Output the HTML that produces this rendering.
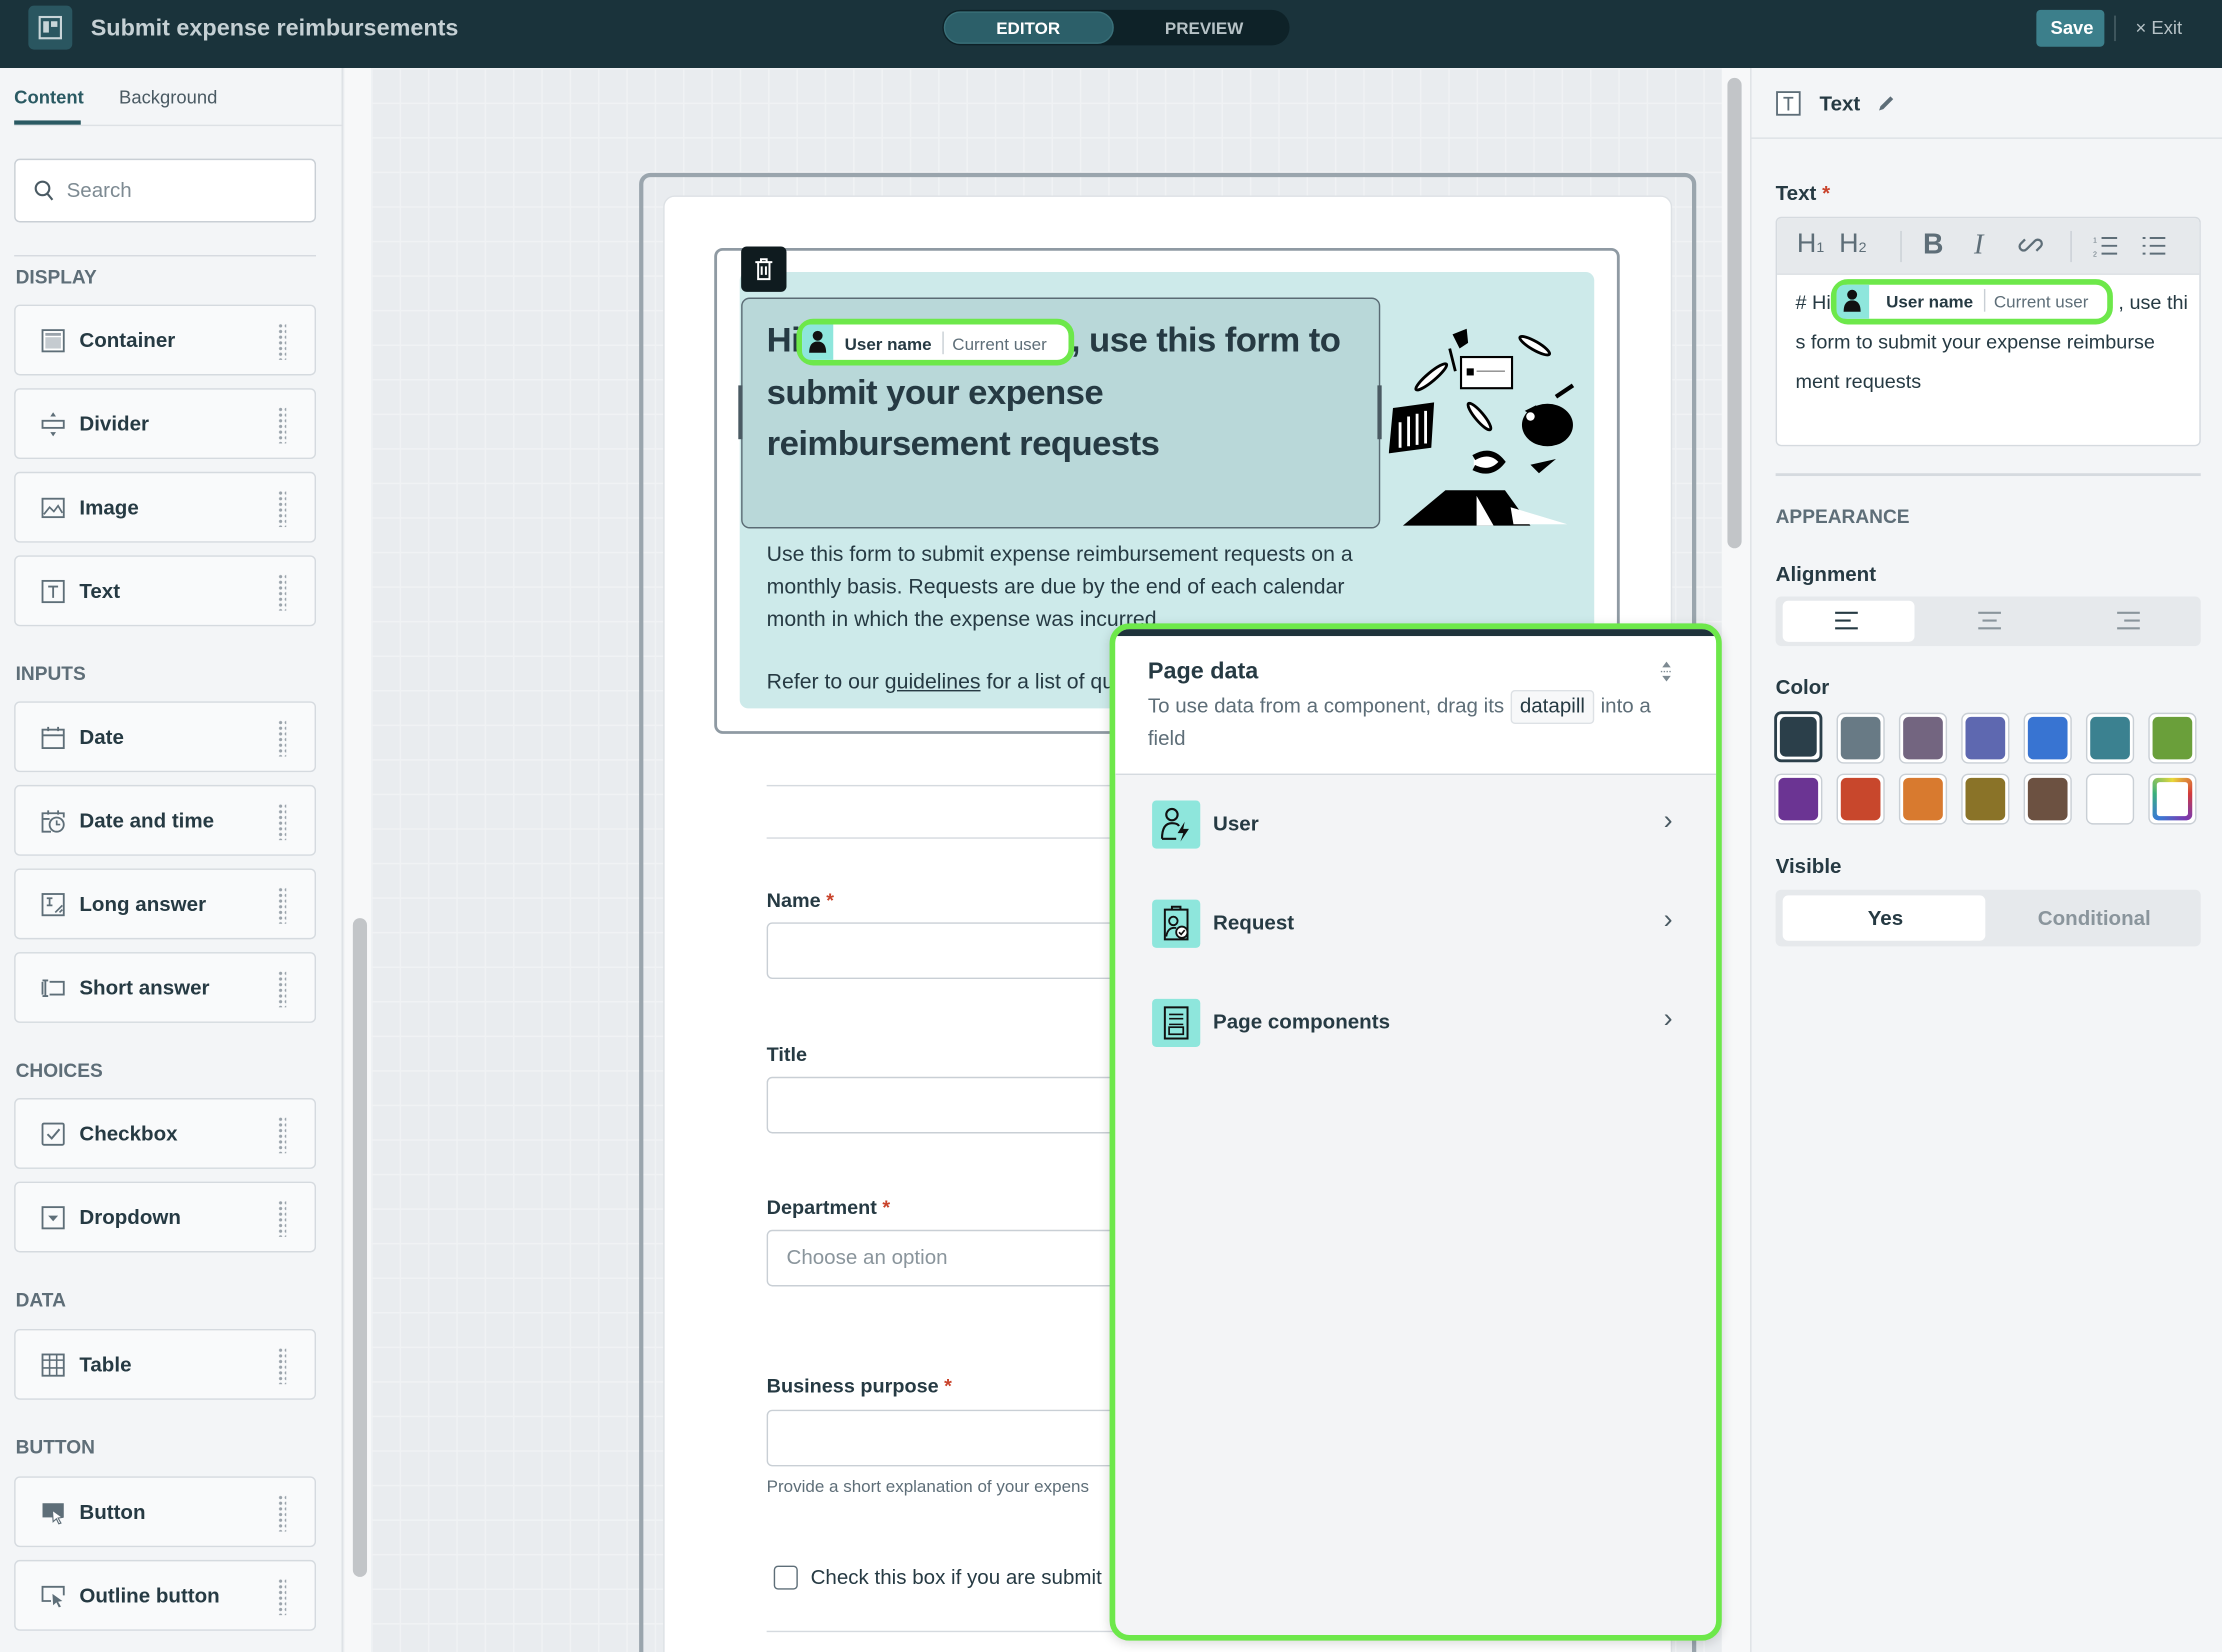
<!DOCTYPE html>
<html><head><meta charset="utf-8">
<style>
*{box-sizing:border-box;margin:0;padding:0}
html,body{width:2222px;height:1652px;overflow:hidden;background:#e9ecef}
#w{position:absolute;left:0;top:0;width:1568px;height:1166px;transform:scale(1.41709,1.41681);transform-origin:0 0;font-family:"Liberation Sans",sans-serif;color:#263a43;overflow:hidden}
.a{position:absolute}
.hdr{left:0;top:0;width:1568px;height:48px;background:#1a333b}
.lp{left:0;top:48px;width:242px;height:1118px;background:#f3f5f7;border-right:1px solid #dde1e5}
.sec{font-size:13.5px;font-weight:bold;color:#5e6e78;left:11px}
.it{left:10px;width:213px;height:50px;background:#f9fafb;border:1px solid #d5dadf;border-radius:4px}
.it .ic{position:absolute;left:18px;top:16px;width:17px;height:17px}
.it .t{position:absolute;left:45px;top:17px;font-size:14.5px;font-weight:bold;color:#263a43}
.it .g{position:absolute;left:185px;top:12px;width:6px;height:26px;background-image:radial-gradient(circle,#9aa3ab 1px,transparent 1.3px);background-size:4px 4px}
.canvas{left:262px;top:48px;width:953px;height:1118px;background-color:#e9ecef;background-image:linear-gradient(#f0f2f4 1px,transparent 1px),linear-gradient(90deg,#f0f2f4 1px,transparent 1px);background-size:20px 24.4px}
.lbl{font-size:14px;font-weight:bold;color:#263a43;left:541px}
.lbl b{color:#c9432b}
.inp{left:541px;width:260px;height:40px;background:#fff;border:1px solid #c9cfd5;border-radius:4px}
.rp{left:1235px;top:48px;width:333px;height:1118px;background:#f3f5f7;border-left:1px solid #dde1e5}
.sw{width:34px;height:36px;border-radius:5px;border:1px solid #c9cfd5;padding:2px;background:#fff}
.sw div{width:100%;height:100%;border-radius:4px}
.row{left:813px;font-size:14.5px;font-weight:bold;color:#263a43}
.rowic{left:813px;width:34px;height:34px;background:#8ee6dc;border-radius:3px}
.chev{left:1174px;font-size:19px;color:#4a5a63}
</style></head><body><div id="w">

<div class="a hdr"></div>
<div class="a" style="left:20px;top:4px;width:31px;height:31px;background:#2a5660;border-radius:4px"></div>
<svg class="a" style="left:27px;top:11px" width="17" height="17" viewBox="0 0 17 17"><rect x="1" y="1" width="15" height="15" fill="none" stroke="#c8d5d8" stroke-width="1.5"/><rect x="3.5" y="4" width="4" height="8" fill="#c8d5d8"/><rect x="9" y="4" width="4.5" height="4" fill="#c8d5d8"/></svg>
<div class="a" style="left:64px;top:11px;font-size:16.5px;font-weight:bold;color:#c5d0d4">Submit expense reimbursements</div>
<div class="a" style="left:665px;top:7px;width:245px;height:25px;background:#0e2228;border-radius:13px"></div>
<div class="a" style="left:666px;top:8px;width:120px;height:23px;background:#2c5f69;border-radius:12px;border:1px solid #3a7079"></div>
<div class="a" style="left:703px;top:13px;font-size:12px;font-weight:bold;color:#fff">EDITOR</div>
<div class="a" style="left:822px;top:13px;font-size:12px;font-weight:bold;color:#b6c2c6">PREVIEW</div>
<div class="a" style="left:1437px;top:7px;width:48px;height:26px;background:#3c7f8b;border-radius:3px"></div>
<div class="a" style="left:1447px;top:12px;font-size:13px;font-weight:bold;color:#fff">Save</div>
<div class="a" style="left:1492px;top:11px;width:1px;height:18px;background:#4d646b"></div>
<div class="a" style="left:1507px;top:12px;font-size:13px;color:#b6c2c6">× Exit</div>

<div class="a lp"></div>
<div class="a" style="left:10px;top:61px;font-size:13px;font-weight:bold;color:#2a5a63">Content</div>
<div class="a" style="left:84px;top:61px;font-size:13px;color:#4a5a63">Background</div>
<div class="a" style="left:10px;top:88px;width:232px;height:1px;background:#dde1e5"></div>
<div class="a" style="left:10px;top:85px;width:47px;height:3px;background:#2a5a63"></div>
<div class="a" style="left:10px;top:112px;width:213px;height:45px;background:#fff;border:1px solid #c9cfd5;border-radius:4px"></div>
<svg class="a" style="left:24px;top:127px" width="15" height="16" viewBox="0 0 15 16"><circle cx="6" cy="6" r="4.8" fill="none" stroke="#4a5a63" stroke-width="1.5"/><path d="M9.5 9.8 L13 14" stroke="#4a5a63" stroke-width="1.5"/></svg>
<div class="a" style="left:47px;top:127px;font-size:14.5px;color:#7d8a92">Search</div>
<div class="a" style="left:10px;top:180px;width:213px;height:1px;background:#d5dadf"></div>

<div class="a sec" style="top:188px">DISPLAY</div>
<div class="a it" style="top:215px"><svg class="ic" viewBox="0 0 17 17"><rect x="1" y="1" width="15" height="15" fill="#fff" stroke="#5e6e78" stroke-width="1.3"/><rect x="3" y="3" width="11" height="2" fill="#9aa3ab"/><rect x="3" y="6" width="11" height="8" fill="#c5cbd0"/></svg><span class="t">Container</span><span class="g"></span></div>
<div class="a it" style="top:274px"><svg class="ic" viewBox="0 0 17 17"><rect x="1" y="6" width="15" height="5" fill="none" stroke="#5e6e78" stroke-width="1.3"/><path d="M8.5 0 L6.5 3 H10.5Z M8.5 17 L6.5 14 H10.5Z" fill="#5e6e78"/></svg><span class="t">Divider</span><span class="g"></span></div>
<div class="a it" style="top:333px"><svg class="ic" viewBox="0 0 17 17"><rect x="1" y="2" width="15" height="13" fill="none" stroke="#5e6e78" stroke-width="1.3"/><path d="M2 13 L6 8 L9 11 L12 7 L15 12" fill="none" stroke="#5e6e78" stroke-width="1.2"/></svg><span class="t">Image</span><span class="g"></span></div>
<div class="a it" style="top:392px"><svg class="ic" viewBox="0 0 17 17"><rect x="1" y="1" width="15" height="15" fill="none" stroke="#5e6e78" stroke-width="1.3"/><path d="M5 5 H12 M8.5 5 V13" stroke="#5e6e78" stroke-width="1.3"/></svg><span class="t">Text</span><span class="g"></span></div>

<div class="a sec" style="top:468px">INPUTS</div>
<div class="a it" style="top:495px"><svg class="ic" viewBox="0 0 17 17"><rect x="1" y="3" width="15" height="13" fill="none" stroke="#5e6e78" stroke-width="1.3"/><path d="M1 7 H16 M5 1 V4 M12 1 V4" stroke="#5e6e78" stroke-width="1.3"/></svg><span class="t">Date</span><span class="g"></span></div>
<div class="a it" style="top:554px"><svg class="ic" viewBox="0 0 17 17"><path d="M7 16 H1 V3 H16 V6 M1 7 H6 M5 1 V4 M12 1 V4" fill="none" stroke="#5e6e78" stroke-width="1.3"/><circle cx="11" cy="11" r="5" fill="none" stroke="#5e6e78" stroke-width="1.3"/><path d="M11 8 V11 H13.5" fill="none" stroke="#5e6e78" stroke-width="1.2"/></svg><span class="t">Date and time</span><span class="g"></span></div>
<div class="a it" style="top:613px"><svg class="ic" viewBox="0 0 17 17"><rect x="1" y="1" width="15" height="15" fill="none" stroke="#5e6e78" stroke-width="1.3"/><path d="M4 4 H8 M6 4 V9 M4 9 H8 M10 14 L15 9 M13 14 L15 12" stroke="#5e6e78" stroke-width="1.2"/></svg><span class="t">Long answer</span><span class="g"></span></div>
<div class="a it" style="top:672px"><svg class="ic" viewBox="0 0 17 17"><path d="M6 4 H16 V13 H6 M3 3 V14 M1 3 H5 M1 14 H5 M1 4 V13" fill="none" stroke="#5e6e78" stroke-width="1.3"/></svg><span class="t">Short answer</span><span class="g"></span></div>

<div class="a sec" style="top:748px">CHOICES</div>
<div class="a it" style="top:775px"><svg class="ic" viewBox="0 0 17 17"><rect x="1" y="1" width="15" height="15" rx="1" fill="none" stroke="#5e6e78" stroke-width="1.3"/><path d="M4.5 8.5 L7.5 11.5 L13 5" fill="none" stroke="#5e6e78" stroke-width="1.4"/></svg><span class="t">Checkbox</span><span class="g"></span></div>
<div class="a it" style="top:834px"><svg class="ic" viewBox="0 0 17 17"><rect x="1" y="1" width="15" height="15" fill="none" stroke="#5e6e78" stroke-width="1.3"/><path d="M5 7 H12 L8.5 11Z" fill="#5e6e78"/></svg><span class="t">Dropdown</span><span class="g"></span></div>

<div class="a sec" style="top:910px">DATA</div>
<div class="a it" style="top:938px"><svg class="ic" viewBox="0 0 17 17"><rect x="1" y="1" width="15" height="15" fill="none" stroke="#5e6e78" stroke-width="1.3"/><path d="M1 5 H16 M6 1 V16 M11 1 V16 M1 10.5 H16" stroke="#5e6e78" stroke-width="1.1"/></svg><span class="t">Table</span><span class="g"></span></div>

<div class="a sec" style="top:1014px">BUTTON</div>
<div class="a it" style="top:1042px"><svg class="ic" viewBox="0 0 17 17"><rect x="1" y="2" width="15" height="10" fill="#5e6e78"/><path d="M8 7 L15 12 L12 12.5 L14 16 L12.5 16.5 L10.8 13 L8.5 15Z" fill="#fff" stroke="#5e6e78" stroke-width="0.8"/></svg><span class="t">Button</span><span class="g"></span></div>
<div class="a it" style="top:1101px"><svg class="ic" viewBox="0 0 17 17"><path d="M7 12 H1 V2 H16 V8" fill="none" stroke="#5e6e78" stroke-width="1.3"/><path d="M8 7 L15 12 L12 12.5 L14 16 L12.5 16.5 L10.8 13 L8.5 15Z" fill="#5e6e78"/></svg><span class="t">Outline button</span><span class="g"></span></div>

<div class="a" style="left:243px;top:48px;width:19px;height:1118px;background:#f7f8f9"></div>
<div class="a" style="left:249px;top:648px;width:10px;height:465px;background:#c2c5c8;border-radius:5px"></div>

<div class="a canvas"></div>
<div class="a" style="left:1215px;top:48px;width:20px;height:1118px;background:#f7f8f9"></div>
<div class="a" style="left:1219px;top:55px;width:10px;height:332px;background:#c2c5c8;border-radius:5px"></div>

<div class="a" style="left:451px;top:122px;width:746px;height:1060px;border:3px solid #9aa5ad;border-radius:8px"></div>
<div class="a" style="left:468px;top:138px;width:712px;height:1040px;background:#fff;border:1px solid #dde1e5;border-radius:8px"></div>
<div class="a" style="left:504px;top:175px;width:639px;height:343px;border:2px solid #8f9aa3;border-radius:6px"></div>
<div class="a" style="left:522px;top:192px;width:603px;height:308px;background:#cdeaea;border-radius:6px"></div>
<div class="a" style="left:523px;top:210px;width:451px;height:163px;background:#b9d8d9;border:1px solid #5a6b74;border-radius:6px"></div>
<div class="a" style="left:521px;top:272px;width:3px;height:38px;background:#4a5a63"></div>
<div class="a" style="left:972px;top:272px;width:3px;height:38px;background:#4a5a63"></div>
<div class="a" style="left:523px;top:174px;width:32px;height:32px;background:#0f1b1f;border-radius:4px"></div>
<svg class="a" style="left:531px;top:181px" width="16" height="18" viewBox="0 0 16 18"><path d="M4 4 H12 V16 H4Z M2 4 H14 M6 4 V2 H10 V4 M6.5 7 V13 M9.5 7 V13" fill="none" stroke="#fff" stroke-width="1.4"/></svg>

<div class="a" style="left:541px;top:223px;font-size:24.5px;font-weight:bold;color:#263a43;line-height:36.5px;width:430px;letter-spacing:-0.4px">Hi<span style="display:inline-block;width:191px"></span>, use this form to<br>submit your expense<br>reimbursement requests</div>
<div class="a" style="left:562px;top:225px;width:196px;height:33px;border:4px solid #6de84a;border-radius:12px;background:#fff"></div>
<div class="a" style="left:566px;top:229px;width:22px;height:25px;background:#8ee6dc;border-radius:6px 0 0 6px"></div>
<svg class="a" style="left:569px;top:232px" width="16" height="18" viewBox="0 0 16 18"><circle cx="8" cy="5" r="3.5" fill="#111"/><path d="M2 17 Q2 9 8 9 Q14 9 14 17Z" fill="#111"/></svg>
<div class="a" style="left:596px;top:236px;font-size:12px;font-weight:bold;color:#263a43">User name</div>
<div class="a" style="left:665px;top:234px;width:1px;height:16px;background:#c9cfd5"></div>
<div class="a" style="left:672px;top:236px;font-size:12px;color:#5e6e78">Current user</div>

<svg class="a" style="left:980px;top:228px" width="135" height="145" viewBox="0 0 135 145">
<path d="M45 8 L55 4 L56 14 L50 18Z" fill="#000"/><line x1="43" y1="18" x2="47" y2="34" stroke="#000" stroke-width="2"/>
<rect x="51" y="24" width="36" height="22" fill="#fff" stroke="#000" stroke-width="1.5"/><rect x="55" y="32" width="5" height="5" fill="#000"/><line x1="62" y1="34" x2="82" y2="34" stroke="#888"/>
<ellipse cx="103" cy="16" rx="12" ry="3" transform="rotate(30 103 16)" fill="#fff" stroke="#000" stroke-width="2"/>
<ellipse cx="30" cy="38" rx="14" ry="3" transform="rotate(-40 30 38)" fill="#fff" stroke="#000" stroke-width="2"/>
<path d="M3 60 L32 56 L30 88 L0 92Z" fill="#000"/><path d="M8 70 V88 M14 66 V87 M20 64 V86 M26 62 V85" stroke="#fff" stroke-width="2"/>
<ellipse cx="64" cy="66" rx="12" ry="3" transform="rotate(50 64 66)" fill="#fff" stroke="#000" stroke-width="2"/>
<ellipse cx="112" cy="72" rx="18" ry="15" fill="#000"/><path d="M96 62 L104 58 L106 68Z" fill="#000"/><circle cx="100" cy="66" r="3" fill="#fff"/>
<line x1="118" y1="52" x2="130" y2="44" stroke="#000" stroke-width="3"/>
<path d="M60 95 Q72 88 80 98 Q72 108 60 102" fill="#fff" stroke="#000" stroke-width="4"/>
<path d="M100 100 L118 96 L106 106Z" fill="#000"/>
<path d="M10 143 L40 118 H82 L100 143Z" fill="#000"/><path d="M62 122 L74 143 H62Z" fill="#fff"/><path d="M86 130 L126 142 H88Z" fill="#fff"/>
</svg>

<div class="a" style="left:541px;top:380px;font-size:15px;line-height:23px;color:#263a43;width:420px">Use this form to submit expense reimbursement requests on a monthly basis. Requests are due by the end of each calendar month in which the expense was incurred.</div>
<div class="a" style="left:541px;top:473px;font-size:15px;color:#263a43;white-space:nowrap">Refer to our <u>guidelines</u> for a list of qu</div>

<div class="a" style="left:541px;top:554px;width:250px;height:1px;background:#d5dadf"></div>
<div class="a" style="left:541px;top:591px;width:250px;height:1px;background:#d5dadf"></div>
<div class="a lbl" style="top:627px">Name <b>*</b></div>
<div class="a inp" style="top:651px"></div>
<div class="a lbl" style="top:736px">Title</div>
<div class="a inp" style="top:760px"></div>
<div class="a lbl" style="top:844px">Department <b>*</b></div>
<div class="a inp" style="top:868px"></div>
<div class="a" style="left:555px;top:880px;font-size:14.5px;color:#8a959c">Choose an option</div>
<div class="a lbl" style="top:970px">Business purpose <b>*</b></div>
<div class="a inp" style="top:995px"></div>
<div class="a" style="left:541px;top:1042px;font-size:12px;color:#5e6e78;white-space:nowrap">Provide a short explanation of your expens</div>
<div class="a" style="left:546px;top:1105px;width:17px;height:17px;border:1.5px solid #5e6e78;border-radius:3px;background:#fff"></div>
<div class="a" style="left:572px;top:1106px;font-size:14.5px;color:#263a43;white-space:nowrap">Check this box if you are submit</div>
<div class="a" style="left:541px;top:1151px;width:250px;height:1px;background:#d5dadf"></div>

<div class="a" style="left:783px;top:440px;width:432px;height:718px;background:#f3f4f6;border:4px solid #6de84a;border-radius:14px;overflow:hidden;box-shadow:0 2px 8px rgba(0,0,0,.15)">
 <div style="position:absolute;left:0;top:0;width:100%;height:5px;background:#1f333b"></div>
 <div style="position:absolute;left:0;top:5px;width:100%;height:98px;background:#fff;border-bottom:1px solid #d5dadf"></div>
</div>
<div class="a" style="left:810px;top:465px;font-size:16.5px;font-weight:bold;color:#263a43">Page data</div>
<svg class="a" style="left:1170px;top:466px" width="12" height="16" viewBox="0 0 12 16"><path d="M6 1 L9 5 H3Z M6 15 L9 11 H3Z" fill="#7d8a92"/><path d="M2 8 H10" stroke="#7d8a92" stroke-dasharray="1 1"/></svg>
<div class="a" style="left:810px;top:487px;font-size:14.5px;line-height:23px;color:#5e6e78;width:380px">To use data from a component, drag its <span style="display:inline-block;border:1px solid #dde1e5;background:#f7f8f9;border-radius:3px;padding:0 6px;color:#263a43;line-height:22px">datapill</span> into a field</div>

<div class="a rowic" style="top:565px"></div>
<svg class="a" style="left:818px;top:569px" width="24" height="26" viewBox="0 0 24 26"><circle cx="9" cy="6" r="4" fill="none" stroke="#111" stroke-width="1.5"/><path d="M2 23 Q2 12 9 12 Q13 12 14 14 M2 23 H12" fill="none" stroke="#111" stroke-width="1.5"/><path d="M18 11 L13 19 H17 L15 25 L21 16 H17Z" fill="#111"/></svg>
<div class="a row" style="top:574px;left:856px">User</div>
<div class="a chev" style="top:569px">›</div>
<div class="a rowic" style="top:635px"></div>
<svg class="a" style="left:819px;top:638px" width="22" height="28" viewBox="0 0 22 28"><path d="M3 4 H19 V25 H3Z M8 4 V2 H14 V4" fill="none" stroke="#111" stroke-width="1.4"/><circle cx="9" cy="12" r="3" fill="none" stroke="#111" stroke-width="1.3"/><path d="M4 23 Q5 16 11 17" fill="none" stroke="#111" stroke-width="1.3"/><circle cx="15" cy="20" r="4" fill="#fff" stroke="#111" stroke-width="1.3"/><path d="M13 20 L14.5 21.5 L17 18.5" fill="none" stroke="#111" stroke-width="1.2"/></svg>
<div class="a row" style="top:644px;left:856px">Request</div>
<div class="a chev" style="top:639px">›</div>
<div class="a rowic" style="top:705px"></div>
<svg class="a" style="left:820px;top:709px" width="20" height="26" viewBox="0 0 20 26"><rect x="2" y="2" width="16" height="22" fill="none" stroke="#111" stroke-width="1.4"/><path d="M5 7 H15 M5 10 H15 M5 14 H15" stroke="#111" stroke-width="1.1"/><rect x="5" y="16" width="10" height="5" fill="none" stroke="#111" stroke-width="1.2"/></svg>
<div class="a row" style="top:714px;left:856px">Page components</div>
<div class="a chev" style="top:709px">›</div>

<div class="a rp"></div>
<svg class="a" style="left:1253px;top:64px" width="18" height="18" viewBox="0 0 18 18"><rect x="1" y="1" width="16" height="16" fill="#fff" stroke="#5e6e78" stroke-width="1.3"/><path d="M5.5 5 H12.5 M9 5 V14" stroke="#5e6e78" stroke-width="1.3"/></svg>
<div class="a" style="left:1284px;top:66px;font-size:14.5px;font-weight:bold;color:#263a43">Text</div>
<svg class="a" style="left:1324px;top:66px" width="14" height="14" viewBox="0 0 14 14"><path d="M2 12 L3 9 L10 2 L12 4 L5 11Z" fill="#5e6e78"/></svg>
<div class="a" style="left:1236px;top:97px;width:332px;height:1px;background:#dde1e5"></div>
<div class="a" style="left:1253px;top:129px;font-size:14.5px;font-weight:bold;color:#263a43">Text<b style="color:#c9432b"> *</b></div>
<div class="a" style="left:1253px;top:153px;width:300px;height:162px;background:#fff;border:1px solid #d5dadf;border-radius:4px;overflow:hidden"><div style="height:40px;background:#e6e9ec;border-bottom:1px solid #dde1e5"></div></div>
<div class="a" style="left:1268px;top:162px;font-size:19px;color:#5e6e78;white-space:nowrap">H<small style="font-size:10px">1</small>&nbsp;&nbsp;H<small style="font-size:10px">2</small></div>
<div class="a" style="left:1341px;top:163px;width:1px;height:22px;background:#c9cfd5"></div>
<div class="a" style="left:1357px;top:162px;font-size:20px;font-weight:bold;color:#5e6e78">B</div>
<div class="a" style="left:1393px;top:162px;font-size:20px;font-style:italic;font-family:'Liberation Serif',serif;color:#5e6e78">I</div>
<svg class="a" style="left:1424px;top:164px" width="18" height="18" viewBox="0 0 18 18"><path d="M8 10 L6 12 A2.8 2.8 0 0 1 2 8 L5 5 M10 8 L12 6 A2.8 2.8 0 0 1 16 10 L13 13 M7 11 L11 7" fill="none" stroke="#5e6e78" stroke-width="1.6"/></svg>
<div class="a" style="left:1461px;top:163px;width:1px;height:22px;background:#c9cfd5"></div>
<svg class="a" style="left:1477px;top:165px" width="18" height="17" viewBox="0 0 18 17"><path d="M6 3 H17 M6 8.5 H17 M6 14 H17" stroke="#5e6e78" stroke-width="1.4"/><text x="0" y="6" font-size="5" fill="#5e6e78">1</text><text x="0" y="16" font-size="5" fill="#5e6e78">2</text></svg>
<svg class="a" style="left:1511px;top:165px" width="18" height="17" viewBox="0 0 18 17"><path d="M6 3 H17 M6 8.5 H17 M6 14 H17 M1 3 H3 M1 8.5 H3 M1 14 H3" stroke="#5e6e78" stroke-width="1.4"/></svg>
<div class="a" style="left:1267px;top:199px;font-size:14px;line-height:28px;color:#263a43;width:280px;white-space:nowrap"># Hi<span style="display:inline-block;width:203px"></span>, use thi<br>s form to submit your expense reimburse<br>ment requests</div>
<div class="a" style="left:1292px;top:197px;width:199px;height:32px;border:4px solid #6de84a;border-radius:12px;background:#fff"></div>
<div class="a" style="left:1296px;top:201px;width:23px;height:24px;background:#8ee6dc;border-radius:6px 0 0 6px"></div>
<svg class="a" style="left:1299px;top:203px" width="16" height="18" viewBox="0 0 16 18"><circle cx="8" cy="5" r="3.5" fill="#111"/><path d="M2 17 Q2 9 8 9 Q14 9 14 17Z" fill="#111"/></svg>
<div class="a" style="left:1331px;top:206px;font-size:12px;font-weight:bold;color:#263a43">User name</div>
<div class="a" style="left:1400px;top:204px;width:1px;height:16px;background:#c9cfd5"></div>
<div class="a" style="left:1407px;top:206px;font-size:12px;color:#5e6e78">Current user</div>

<div class="a" style="left:1253px;top:334px;width:300px;height:2px;background:#d5dadf"></div>
<div class="a" style="left:1253px;top:357px;font-size:13.5px;font-weight:bold;color:#5e6e78">APPEARANCE</div>
<div class="a" style="left:1253px;top:398px;font-size:14.5px;font-weight:bold;color:#263a43">Alignment</div>
<div class="a" style="left:1253px;top:421px;width:300px;height:35px;background:#e6e9ec;border-radius:4px"></div>
<div class="a" style="left:1258px;top:424px;width:93px;height:29px;background:#fff;border-radius:4px"></div>
<svg class="a" style="left:1294px;top:431px" width="18" height="14" viewBox="0 0 18 14"><path d="M1 1.5 H17 M1 7 H12 M1 12.5 H17" stroke="#263a43" stroke-width="1.5"/></svg>
<svg class="a" style="left:1395px;top:431px" width="18" height="14" viewBox="0 0 18 14"><path d="M1 1.5 H17 M4 7 H14 M1 12.5 H17" stroke="#8a959c" stroke-width="1.5"/></svg>
<svg class="a" style="left:1493px;top:431px" width="18" height="14" viewBox="0 0 18 14"><path d="M1 1.5 H17 M6 7 H17 M1 12.5 H17" stroke="#8a959c" stroke-width="1.5"/></svg>

<div class="a" style="left:1253px;top:478px;font-size:14.5px;font-weight:bold;color:#263a43">Color</div>
<div class="a sw" style="left:1252px;top:502px;border:2px solid #2b3f4a"><div style="background:#2b3f4a"></div></div>
<div class="a sw" style="left:1296px;top:503px"><div style="background:#687a85"></div></div>
<div class="a sw" style="left:1340px;top:503px"><div style="background:#736580"></div></div>
<div class="a sw" style="left:1384px;top:503px"><div style="background:#5e68b0"></div></div>
<div class="a sw" style="left:1428px;top:503px"><div style="background:#3874d2"></div></div>
<div class="a sw" style="left:1472px;top:503px"><div style="background:#3b8190"></div></div>
<div class="a sw" style="left:1516px;top:503px"><div style="background:#6a9f3a"></div></div>
<div class="a sw" style="left:1252px;top:546px"><div style="background:#6b3493"></div></div>
<div class="a sw" style="left:1296px;top:546px"><div style="background:#c8472c"></div></div>
<div class="a sw" style="left:1340px;top:546px"><div style="background:#d87a2f"></div></div>
<div class="a sw" style="left:1384px;top:546px"><div style="background:#8a7328"></div></div>
<div class="a sw" style="left:1428px;top:546px"><div style="background:#6c5141"></div></div>
<div class="a sw" style="left:1472px;top:546px"><div style="background:#fff"></div></div>
<div class="a sw" style="left:1516px;top:546px"><div style="background:conic-gradient(#e8d83a,#d43a3a,#7a3ab0,#3a7ad4,#3ab07a,#e8d83a);padding:3px"><div style="background:#fff;width:100%;height:100%;border-radius:2px"></div></div></div>

<div class="a" style="left:1253px;top:604px;font-size:14.5px;font-weight:bold;color:#263a43">Visible</div>
<div class="a" style="left:1253px;top:628px;width:300px;height:40px;background:#e6e9ec;border-radius:4px"></div>
<div class="a" style="left:1258px;top:632px;width:143px;height:32px;background:#fff;border-radius:4px"></div>
<div class="a" style="left:1318px;top:641px;font-size:14.5px;font-weight:bold;color:#263a43">Yes</div>
<div class="a" style="left:1438px;top:641px;font-size:14.5px;font-weight:bold;color:#8a959c">Conditional</div>

</div></body></html>
